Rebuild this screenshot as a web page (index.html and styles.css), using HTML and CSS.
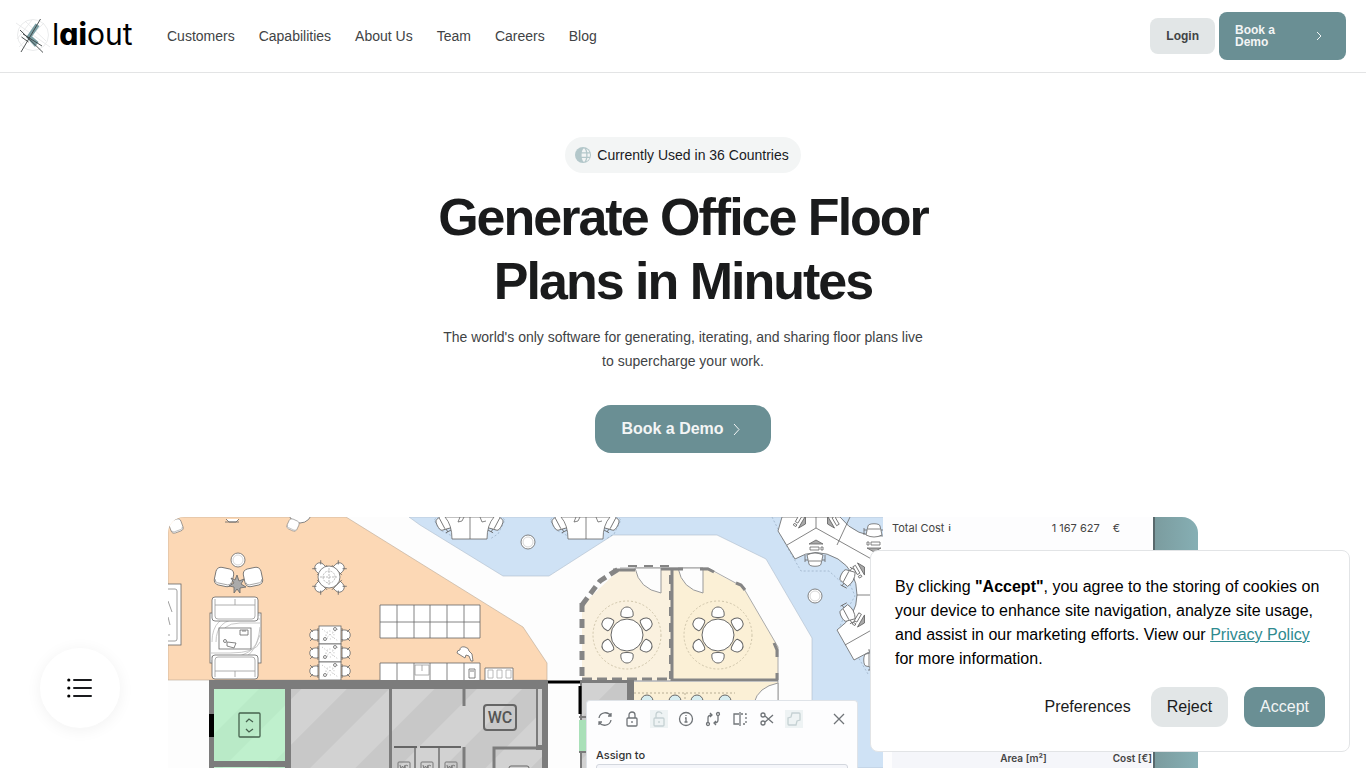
FILE: index.html
```html
<!DOCTYPE html>
<html lang="en">
<head>
    <meta charset="UTF-8">
    <meta name="viewport" content="width=device-width, initial-scale=1.0">
    <title>laiout - Generate Office Floor Plans in Minutes</title>
    <link rel="stylesheet" href="styles.css">
</head>
<body>
    <!-- Navbar -->
    <header class="navbar">
        <a href="#" class="logo">
            <svg class="logo-mark" width="34" height="36" viewBox="0 0 34 36" fill="none">
                <g stroke="#e4e6e7" stroke-width=".8">
                    <circle cx="17" cy="17" r="15.500"/>
                    <path d="M0 5l34 24M9 3l21 20M3 29L28 5M1 21L16 2"/>
                </g>
                <path d="M19.500 5.500l4 2.500L15 20l-4-2z" fill="#7b9fa4"/>
                <path d="M10 19l4-2.500 8.500 7.500-3.500 5z" fill="#7b9fa4"/>
                <path d="M24.500 1L5 34M4 12l23 22.500M5.500 19l7 5M7 16l19 12" stroke="#3a3f41" stroke-width=".9"/>
            </svg>
            <span class="logo-text">l<b>ai</b>out</span>
        </a>
        <nav>
            <ul class="nav-links">
                <li><a href="#customers">Customers</a></li>
                <li><a href="#capabilities">Capabilities</a></li>
                <li><a href="#about">About Us</a></li>
                <li><a href="#team">Team</a></li>
                <li><a href="#careers">Careers</a></li>
                <li><a href="#blog">Blog</a></li>
            </ul>
        </nav>
        <div class="nav-actions">
            <a href="#login" class="btn-small btn-light">Login</a>
            <a href="#demo" class="btn-small btn-demo">
                <span>Book a Demo</span>
                <svg width="22" height="12" viewBox="0 0 22 12"><path d="M9 2l4 4-4 4" fill="none" stroke="currentColor"/></svg>
            </a>
        </div>
    </header>

    <!-- Hero Section -->
    <main class="hero">
        <div class="badge">
            <svg width="18" height="18" viewBox="0 0 18 18">
                <circle cx="9" cy="9" r="8" fill="#b3c7ca"/>
                <path d="M10 2.200c1.200 1 1.800 2.500 2 4H7.800c.2-1.500 1-3 2.200-4zM7.600 7.500h4.600v3.200H7.600zM7.800 12H12c-.2 1.500-.8 3-2 4-1.200-1-2-2.500-2.200-4zM12.200 2.700c1.600.7 2.700 2 3.300 3.500h-2.200c-.2-1.300-.5-2.500-1.100-3.500zM13.500 7.500h2.300c.2 1 .2 2.200 0 3.200h-2.300zM13.300 12h2.200c-.6 1.500-1.700 2.700-3.300 3.400.6-1 .9-2.200 1.100-3.400z" fill="#f3f5f5"/>
            </svg>
            Currently Used in 36 Countries
        </div>
        <h1>Generate Office Floor Plans in Minutes</h1>
        <p>The world's only software for generating, iterating, and sharing floor plans live to supercharge your work.</p>
        <a href="#demo" class="btn">
            Book a Demo
            <svg width="24" height="16" viewBox="0 0 24 16"><path d="M10 3l5 5.500-5 5.500" fill="none" stroke="currentColor"/></svg>
        </a>

        <!-- Product preview -->
        <div class="preview">
            <svg class="plan" viewBox="0 0 1030 251" preserveAspectRatio="xMinYMin slice" role="img" aria-label="Office floor plan">
                <defs>
                    <pattern id="stripes" width="62" height="62" patternUnits="userSpaceOnUse" patternTransform="rotate(45)">
                        <rect width="62" height="62" fill="#d2d2d2"/>
                        <rect width="30" height="62" fill="#c8c8c8"/>
                    </pattern>
                    <pattern id="greenStripes" width="62" height="62" patternUnits="userSpaceOnUse" patternTransform="rotate(45)">
                        <rect width="62" height="62" fill="#bff0cd"/>
                        <rect width="30" height="62" fill="#b9eac7"/>
                    </pattern>
                    <g id="seat">
                        <path d="M-6 -19c-2-12 14-12 12 0-1 2-11 2-12 0z"/>
                    </g>
                    <g id="meeting">
                        <circle r="34" fill="none" stroke="#cfc5aa" stroke-dasharray="2 2"/>
                        <circle r="16"/>
                        <use href="#seat"/>
                        <use href="#seat" transform="rotate(60)"/>
                        <use href="#seat" transform="rotate(120)"/>
                        <use href="#seat" transform="rotate(180)"/>
                        <use href="#seat" transform="rotate(240)"/>
                        <use href="#seat" transform="rotate(300)"/>
                    </g>
                    <g id="deskChair">
                        <path d="M-8 5l2-9c0-3 12-3 12 0l2 9q-8 4-16 0z"/>
                        <path d="M-6 -1h12M-10 -2v7M10 -2v7M-10 0h3M7 0h3" fill="none"/>
                    </g>
                    <g id="cafeChair">
                        <path d="M-5 3v-3c0-7 10-7 10 0v3z"/>
                        <path d="M-6 -5l3 3M6 -5l-3 3M-7 3h3M4 3h3" fill="none"/>
                    </g>
                    <g id="laptop">
                        <path d="M-7 0l7-4 7 4z" fill="#aaa"/>
                        <path d="M-6 3h9v3h-9zM5 3h2v3h-2z"/>
                    </g>
                    <g id="cafeTable">
                        <use href="#cafeChair" transform="translate(-15 9) rotate(-90)"/>
                        <use href="#cafeChair" transform="translate(15 9) rotate(90)"/>
                        <rect x="-11" width="22" height="18"/>
                        <path d="M-8 3L8 15M8 3L-8 15M-4 9a4 4 0 1 0 8 0 4 4 0 1 0-8 0" fill="none" stroke="#aaa" stroke-dasharray="1 2"/>
                        <circle cx="5" cy="3" r="1.500"/><circle cx="-5" cy="13" r="1.500"/>
                    </g>
                    <g id="sofa">
                        <rect width="46" height="24" rx="3"/>
                        <path d="M3 2v17q0 3 3 3h34q3 0 3-3V2M3 8h40M23 2v6" fill="none" stroke="#999"/>
                    </g>
                    <g id="armchair">
                        <rect x="-9" y="-9" width="18" height="18" rx="5"/>
                        <path d="M-8 4q0 3 3 3H5q3 0 3-3" fill="none" stroke="#999"/>
                    </g>
                    <g id="smallWc" fill="none" stroke="#777">
                        <rect width="12" height="12" rx="1"/>
                        <path d="M2 3l1 4 1.500-3 1.500 3 1-4M10 4q-3-2-3 1t3 2"/>
                    </g>
                    <g id="deskPair">
                        <path d="M-31 -1l-5 4 6 10 16 8M30 -1l5 4-7 14-8 5" fill="none" stroke="#9db2c8" stroke-dasharray="2 2"/>
                        <use href="#deskChair" transform="translate(-27 6) rotate(-118)"/>
                        <use href="#deskChair" transform="translate(26 6) rotate(118)"/>
                        <path d="M-25 0q7 8 7 22h35q0-14 7-22z"/>
                        <path d="M0 0v22M-10 0l-2 5 4-1 2-4M10 0l2 5 4-1" fill="none"/>
                    </g>
                </defs>

                <rect width="1030" height="251" fill="#fdfdfd"/>

                <!-- open work area -->
                <path d="M241 0l11 8 83 51h46l64-41h104l49 24 46 79v130h72V0z" fill="#cfe2f5" stroke="#aebccb" stroke-width=".6"/>

                <!-- lounge -->
                <path d="M0 0h178l74 46 103 64 24 36v17H0z" fill="#fcd8b5" stroke="#b9a895" stroke-width=".6"/>

                <!-- meeting rooms -->
                <path d="M414 163V88l38-36h52v111z" fill="#faf1df"/>
                <path d="M504 163V52h36l35 18 35 60v33z" fill="#fbf0d6"/>
                <path d="M466 165h144v86H466z" fill="#fbf0d6"/>
                <path d="M452 51h88l35 19 35 60v121" fill="none" stroke="#aaa"/>
                <g fill="#fdfdfd" stroke="#999">
                    <path d="M467 51h26v25q-22-4-26-25zM510 51h25v25q-21-4-25-25zM610 166q-20 4-24 20v30h24z"/>
                </g>
                <g fill="none" stroke="#858585">
                    <path d="M414 86v77" stroke-width="5" stroke-dasharray="9 7"/>
                    <path d="M414 88l18-24 20-13" stroke-width="5" stroke-dasharray="9 5"/>
                    <path d="M445 53h22M493 52h22M532 52h8l6 3M568 66l5 2 4 5M606 126l3 7v7M609 156v7" stroke-width="3"/>
                    <path d="M460 49h44" stroke-width="2" stroke-dasharray="9 7"/>
                    <path d="M504 52v112M504 163h106" stroke-width="3"/>
                    <path d="M414 162h90" stroke-width="3" stroke-dasharray="10 5"/>
                    <path d="M414 164h90" stroke-width="1"/>
                    <path d="M502 58v104" stroke-width="2" stroke-dasharray="9 7"/>
                </g>
                <g fill="#fff" stroke="#666">
                    <use href="#meeting" transform="translate(459 118)"/>
                    <use href="#meeting" transform="translate(550 118)"/>
                </g>
                <path d="M466 176h101M517 176v8" fill="none" stroke="#b8ae94" stroke-dasharray="2 2"/>
                <g fill="#d7edf0" stroke="#666">
                    <circle cx="479" cy="184" r="6"/><circle cx="507" cy="184" r="6"/>
                    <circle cx="529" cy="184" r="6"/><circle cx="557" cy="184" r="6"/>
                </g>

                <!-- desks -->
                <g fill="#fff" stroke="#666" stroke-width=".8">
                    <use href="#deskPair" transform="translate(302 0)"/>
                    <use href="#deskPair" transform="translate(418 0)"/>
                    <circle cx="360" cy="25" r="7"/><circle cx="360" cy="25" r="5" stroke="#ccc"/>
                    <path d="M604 0l14 28 15 26h28l12 11h8l6 14-7 12-8 18 28 48h16" fill="none" stroke="#9db2c8" stroke-dasharray="2 2"/>
                    <path d="M614 0l-4 14 17 28q21-13 43 0 19 12 19 36 0 21-20 35l17 30 17-9 13-20V19q-28 2-44-19z"/>
                    <path d="M648 0v11M648 11l-29 17M648 11l68 38M682 0l-13 28M689 78h27M677 128l39-22" fill="none"/>
                    <use href="#deskChair" transform="translate(647 43) rotate(180)"/>
                    <use href="#deskChair" transform="translate(679 60) rotate(-62)"/>
                    <use href="#deskChair" transform="translate(679 97) rotate(-118)"/>
                    <use href="#deskChair" transform="translate(702 143) rotate(-90)"/>
                    <use href="#laptop" transform="translate(648 27)"/>
                    <use href="#laptop" transform="translate(634 5) rotate(120)"/>
                    <use href="#laptop" transform="translate(663 5) rotate(-120)"/>
                    <use href="#laptop" transform="translate(693 52) rotate(60)"/>
                    <use href="#laptop" transform="translate(693 104) rotate(120)"/>
                    <use href="#laptop" transform="translate(706 31) rotate(180)"/>
                    <use href="#deskChair" transform="translate(706 13)"/>
                    <circle cx="647" cy="79" r="7"/><circle cx="647" cy="79" r="5" stroke="#ccc"/>
                </g>

                <!-- lounge furniture -->
                <g fill="#fff" stroke="#666" stroke-width=".8">
                    <use href="#armchair" transform="translate(8 9) scale(.7) rotate(-20)"/>
                    <path d="M57 5h14M58 2l3 3h7l3-3"/>
                    <circle cx="132" cy="-6" r="12"/>
                    <use href="#armchair" transform="translate(125 8) scale(.6) rotate(25)"/>
                    <circle cx="70" cy="43" r="7"/><circle cx="70" cy="43" r="5" stroke="#ccc"/>
                    <use href="#armchair" transform="translate(56 60) rotate(12)"/>
                    <use href="#armchair" transform="translate(85 60) rotate(-12)"/>
                    <path d="M69 58l2 6 5-2-3 5 5 3-6 1v5l-3-4-3 4v-6l-5-1 5-3-3-5 4 2z" fill="#aaa"/>
                    <rect x="-8" y="67" width="21" height="61"/>
                    <path d="M0 72h7q2 0 2 2v48q0 2-2 2H0M0 84l4 11M0 100l2 8M0 118h2" fill="none" stroke="#888"/>
                    <rect x="42" y="96" width="51" height="50"/>
                    <path d="M44 125q0-27 28-27h20M48 125q0-23 24-23h20M52 125q0-19 20-19h20M92 110q-3 34-30 34H43M92 118q-6 22-30 22H43M92 125q-4 11-30 11H43" fill="none" stroke="#bbb"/>
                    <use href="#sofa" transform="translate(44 80)"/>
                    <use href="#sofa" transform="translate(90 162) rotate(180)"/>
                    <rect x="51" y="111" width="32" height="21"/>
                    <path d="M72 113h8v5h-8zM74 114h4M59 125l9 1-2 5-7-2z"/><circle cx="57" cy="124" r="1.500"/>
                    <use href="#cafeChair" transform="translate(152 51) rotate(-45)"/>
                    <use href="#cafeChair" transform="translate(171 51) rotate(45)"/>
                    <use href="#cafeChair" transform="translate(171 70) rotate(135)"/>
                    <use href="#cafeChair" transform="translate(152 70) rotate(225)"/>
                    <circle cx="161" cy="60" r="11"/>
                    <path d="M161 51v18M152 60h18M155 60a6 6 0 1 0 12 0 6 6 0 1 0-12 0" fill="none" stroke="#aaa" stroke-dasharray="2 1"/>
                    <use href="#cafeTable" transform="translate(162 109)"/>
                    <use href="#cafeTable" transform="translate(162 127)"/>
                    <use href="#cafeTable" transform="translate(162 145)"/>
                    <path d="M212 88h100v33H212zM212 105h100M229 88v33M246 88v33M262 88v33M279 88v33M296 88v33"/>
                    <path d="M212 146h100v18H212zM229 146v18M246 146v18M262 146v18M279 146v18M296 146v18M301 152h6v9h-6zM302 154h4"/>
                    <path d="M247 148h14v10h-14zM254 148v6" stroke="#999"/>
                    <path d="M317 151h28v13h-28z"/>
                    <path d="M320 153h5v8h-5zM329 153h5v8h-5zM338 153h5v8h-5z" stroke="#aaa"/>
                    <path d="M289 136q0-3 3-3 0-4 5-3 4 1 4 4l3 3 1 7h-2l-2-5-3-1-1 3z"/>
                </g>

                <!-- core walls -->
                <path d="M41 163h339v88H41z" fill="#7c7c7c"/>
                <path d="M46 172h71v72H46zM46 250h71v1H46z" fill="url(#greenStripes)"/>
                <path d="M123 172h98v79h-98z" fill="url(#stripes)"/>
                <path d="M224 172h144v79H224z" fill="url(#stripes)"/>
                <path d="M370 172h4v56h-4z" fill="#d0d0d0"/>
                <path d="M41 197h5v23h-5z" fill="#000"/>
                <path d="M296 172v17M296 230v21M326 251v-20h48" fill="none" stroke="#7c7c7c" stroke-width="3"/>
                <path d="M328 233h46v18h-46z" fill="url(#stripes)"/>
                <path d="M226 230h23M252 230h41" stroke="#444" stroke-width="1.500"/>
                <path d="M247 231v20M271 231v20" stroke="#888" stroke-width="2"/>
                <use href="#smallWc" transform="translate(230 245)"/>
                <use href="#smallWc" transform="translate(253 245)"/>
                <use href="#smallWc" transform="translate(277 245)"/>
                <rect x="341" y="249" width="20" height="12" rx="2" fill="none" stroke="#666"/>
                <rect x="71" y="196" width="21" height="24" rx="1" fill="none" stroke="#46614e" stroke-width="1.300"/>
                <path d="M78 205l3-3 4 3M78 212l3 3 4-3" fill="none" stroke="#46614e" stroke-width="1.300"/>
                <rect x="316" y="188" width="32" height="25" rx="3" fill="none" stroke="#666" stroke-width="2"/>
                <text x="332" y="206" class="wc">WC</text>

                <path d="M412 163h54v88h-54z" fill="#7c7c7c"/>
                <path d="M414 166h45v85h-45z" fill="url(#stripes)"/>
                <path d="M411 203h9v31h-9z" fill="#a9e0b8"/>
                <path d="M411 200h9M411 235h9" stroke="#7c7c7c" stroke-width="2"/>
                <path d="M380 165h32M412 169v28" stroke="#000" stroke-width="3"/>
            </svg>

            <section class="tools">
                <div class="tools-bar">
                    <button type="button" aria-label="Refresh"><svg viewBox="0 0 18 18"><path d="M3 8c1-6 9-7 12-2M15 3v3h-3M15 10c-1 6-9 7-12 2M3 15v-3h3"/></svg></button>
                    <button type="button" aria-label="Lock"><svg viewBox="0 0 18 18"><rect x="4" y="8" width="10" height="8" rx="1"/><path d="M6 8V5c0-4 6-4 6 0v3M9 11v2"/></svg></button>
                    <button type="button" class="off" aria-label="Unlock"><svg viewBox="0 0 18 18"><rect x="4" y="8" width="10" height="8" rx="1"/><path d="M6 8V5c0-4 5-4 6-1M9 11v2"/></svg></button>
                    <button type="button" aria-label="Info"><svg viewBox="0 0 18 18"><circle cx="9" cy="9" r="6.500"/><path d="M8 8h1v4M7.500 12h3M9 5v1"/></svg></button>
                    <button type="button" aria-label="Swap"><svg viewBox="0 0 18 18"><circle cx="4" cy="14" r="1.500"/><circle cx="14" cy="4" r="1.500"/><path d="M4 12V8q0-3 4-3M6 3l2 2-2 2M14 6v4q0 3-4 3M12 11l-2 2 2 2"/></svg></button>
                    <button type="button" aria-label="Mirror"><svg viewBox="0 0 18 18"><path d="M8 4H3v10h5M9 2v14"/><path d="M10 4h5v10h-5" stroke-dasharray="2 2"/></svg></button>
                    <button type="button" aria-label="Cut"><svg viewBox="0 0 18 18"><circle cx="5" cy="5" r="2"/><circle cx="5" cy="13" r="2"/><path d="M7 6l8 7M7 12l8-7"/></svg></button>
                    <button type="button" class="off" aria-label="Shape"><svg viewBox="0 0 18 18"><path d="M7 3h7q1 0 1 1v6l-3 1-1 4H4q-1 0-1-1V8l3-1z"/></svg></button>
                    <button type="button" class="close" aria-label="Close"><svg viewBox="0 0 18 18"><path d="M4 4l10 10M14 4L4 14"/></svg></button>
                </div>
                <label for="assign">Assign to</label>
                <select id="assign"><option></option></select>
            </section>

            <section class="costs">
                <div class="costs-total">
                    <span>Total Cost</span>
                    <b>i</b>
                    <span class="amount">1 167 627</span>
                    <span>€</span>
                </div>
                <div class="costs-head">
                    <span>Area [m²]</span>
                    <span>Cost [€]</span>
                </div>
            </section>
        </div>
    </main>

    <button type="button" class="menu-button" aria-label="Contents">
        <svg width="26" height="20" viewBox="0 0 26 20">
            <path d="M7 2h17M7 10h17M7 18h17" stroke="#1a1b1e" stroke-width="2" stroke-linecap="round"/>
            <circle cx="1.800" cy="2" r="1.600"/><circle cx="1.800" cy="10" r="1.600"/><circle cx="1.800" cy="18" r="1.600"/>
        </svg>
    </button>

    <!-- Cookie banner -->
    <aside class="cookies">
        <p>By clicking <b>"Accept"</b>, you agree to the storing of cookies on your device to enhance site navigation, analyze site usage, and assist in our marketing efforts. View our <a href="#privacy">Privacy Policy</a> for more information.</p>
        <div class="cookies-actions">
            <button type="button" class="preferences">Preferences</button>
            <button type="button" class="reject">Reject</button>
            <button type="button" class="accept">Accept</button>
        </div>
    </aside>
</body>
</html>
```
FILE: styles.css
```css
* {
    box-sizing: border-box;
}
body {
    font-family: "Liberation Sans", Arial, sans-serif;
    margin: 0;
    min-height: 100vh;
    display: flex;
    flex-direction: column;
    background-color: #fff;
    color: #1a1b1e;
}
a {
    color: inherit;
    text-decoration: none;
}
button {
    font: inherit;
    color: inherit;
    border: 0;
    background: none;
    cursor: pointer;
}
.navbar {
    display: flex;
    align-items: center;
    padding: 12px 20px 12px 16px;
    border-bottom: 1px solid #e3e4e5;
}
.logo {
    display: flex;
    align-items: center;
    gap: 2px;
    width: 151px;
    color: #000;
}
.logo-text {
    padding-bottom: 4px;
    font-family: Inter, sans-serif;
    font-size: 30px;
    line-height: 36px;
    font-weight: 400;
    font-feature-settings: "cv11";
}
.logo-text b {
    font-weight: 800;
}
.nav-links {
    list-style: none;
    display: flex;
    gap: 24px;
    margin: 0;
    padding: 0;
    font-size: 14px;
    color: #414345;
}
.nav-actions {
    display: flex;
    align-items: center;
    gap: 4px;
    margin-left: auto;
}
.btn-small {
    padding: 12px 16px;
    border-radius: 8px;
    font-size: 12px;
    line-height: 12px;
    font-weight: bold;
}
.btn-light {
    background-color: #e2e6e7;
    color: #414345;
}
.btn-demo {
    display: flex;
    align-items: center;
    justify-content: space-between;
    width: 127px;
    background-color: #6a8f94;
    color: #f3f5f5;
}
.btn-demo span {
    width: 50px;
}
.hero {
    flex: 1;
    display: flex;
    flex-direction: column;
    align-items: center;
    padding: 64px 16px 0;
    text-align: center;
}
.badge {
    display: flex;
    align-items: center;
    gap: 5px;
    height: 36px;
    padding: 0 12px 0 9px;
    border-radius: 18px;
    background-color: #f3f5f5;
    font-size: 14px;
}
.hero h1 {
    max-width: 560px;
    margin: 12px 0;
    font-size: 52px;
    line-height: 64px;
    letter-spacing: -2px;
    color: #1a1b1c;
}
.hero p {
    max-width: 490px;
    margin: 0 0 32px;
    font-size: 14px;
    line-height: 24px;
    color: #414345;
}
.btn {
    display: flex;
    align-items: center;
    height: 48px;
    padding: 0 23px 0 26px;
    border-radius: 16px;
    background-color: #6a8f94;
    color: #f3f5f5;
    font-weight: bold;
}
.preview {
    position: relative;
    flex: 1;
    display: grid;
    width: 100%;
    max-width: 1030px;
    min-height: 251px;
    margin-top: 64px;
    border-radius: 16px 16px 0 0;
    overflow: hidden;
    background: #fdfdfd;
    font-family: Inter, sans-serif;
    text-align: left;
}
.plan {
    width: 100%;
    height: 100%;
}
.wc {
    font: 500 16px Roboto, sans-serif;
    fill: #555;
    text-anchor: middle;
}
.tools {
    position: absolute;
    left: 418px;
    top: 183px;
    width: 272px;
    padding: 9px;
    border: 1px solid #dfe3e8;
    border-bottom: 0;
    border-radius: 4px 4px 0 0;
    background-color: #fdfdfe;
}
.tools-bar {
    display: flex;
    gap: 9px;
}
.tools-bar button {
    display: flex;
    width: 18px;
    height: 18px;
    padding: 0;
}
.tools-bar svg {
    width: 18px;
    height: 18px;
    fill: none;
    stroke: #707478;
    stroke-width: 1.3;
}
.tools-bar .off {
    background-color: #eef3f4;
}
.tools-bar .off svg {
    stroke: #c5d1d3;
}
.tools-bar .close {
    margin-left: auto;
}
.tools label {
    display: block;
    margin-top: 18px;
    font-size: 11px;
    line-height: 18px;
    font-weight: 500;
    color: #333;
}
.tools select {
    width: 100%;
    height: 24px;
    border: 1px solid #d3d7de;
    border-radius: 3px;
    background-color: #f5f6fa;
    appearance: none;
}
.costs {
    position: absolute;
    top: 0;
    right: 0;
    bottom: 0;
    width: 315px;
    display: flex;
    flex-direction: column;
    justify-content: space-between;
    padding-right: 44px;
    background: linear-gradient(90deg, #fdfdfe 270px, #59696c 270px, #59696c 272px, #7b9c9f 272px, #86afb4 100%);
    font-size: 11px;
    color: #444;
}
.costs-total {
    display: flex;
    align-items: center;
    height: 21px;
    padding: 0 34px 0 9px;
}
.costs-total b {
    margin-left: 4px;
    font-size: 8px;
}
.costs-total .amount {
    margin: 0 13px 0 auto;
}
.costs-head {
    display: flex;
    justify-content: flex-end;
    gap: 66px;
    height: 20px;
    margin: 0 2px 0 9px;
    background-color: #f5f6fa;
    font-size: 10px;
    line-height: 20px;
    font-weight: 600;
}
.menu-button {
    position: fixed;
    left: 40px;
    bottom: 40px;
    display: grid;
    place-items: center;
    width: 80px;
    height: 80px;
    padding: 0;
    border-radius: 50%;
    background-color: #fff;
    box-shadow: 0 2px 16px rgba(0, 0, 0, 0.06);
}
.cookies {
    position: fixed;
    right: 16px;
    bottom: 16px;
    max-width: 480px;
    padding: 24px;
    border: 1px solid #e2e4e6;
    border-radius: 8px;
    background-color: #fff;
    color: #000;
    line-height: 24px;
}
.cookies p {
    margin: 0 0 16px;
}
.cookies p a {
    color: #2f8a8f;
    text-decoration: underline;
}
.cookies-actions {
    display: flex;
    justify-content: flex-end;
    gap: 16px;
}
.cookies-actions button {
    height: 40px;
    padding: 0 16px;
    border-radius: 12px;
    color: #1a1b1c;
}
.cookies-actions .preferences {
    padding: 0 4px;
}
.cookies-actions .reject {
    background-color: #e2e6e7;
}
.cookies-actions .accept {
    background-color: #6a8f94;
    color: #f3f5f5;
}
```
